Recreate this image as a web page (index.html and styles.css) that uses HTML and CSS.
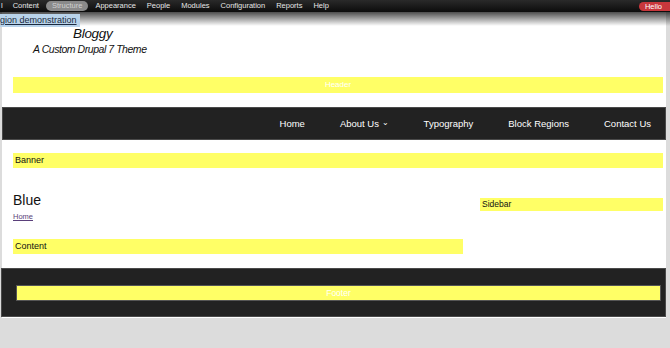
FILE: index.html
```html
<!DOCTYPE html>
<html lang="en">
  <head>
    <meta charset="UTF-8" />
    <meta name="viewport" content="width=device-width, initial-scale=1.0" />
    <title>Bloggy - Blue</title>
    <link rel="stylesheet" href="styles.css">
  </head>
  <body>
    <div class="toolbar">
      <ul class="toolbar-menu">
        <li class="cut">l</li>
        <li>Content</li>
        <li class="active">Structure</li>
        <li>Appearance</li>
        <li>People</li>
        <li>Modules</li>
        <li>Configuration</li>
        <li>Reports</li>
        <li>Help</li>
      </ul>
      <span class="hello">Hello</span>
    </div>

    <div class="page">
      <div class="toolbar-shadow"></div>
      <a class="demo-tab" href="#">gion demonstration</a>

      <div class="branding">
        <div class="site-name">Bloggy</div>
        <div class="site-slogan">A Custom Drupal 7 Theme</div>
      </div>

      <div class="region region-header">Header</div>

      <nav class="main-nav">
        <a href="#">Home</a>
        <a href="#">About Us <span class="caret">&#8964;</span></a>
        <a href="#">Typography</a>
        <a href="#">Block Regions</a>
        <a href="#">Contact Us</a>
      </nav>

      <div class="region region-banner">Banner</div>

      <div class="main">
        <div class="content-col">
          <h1>Blue</h1>
          <a class="breadcrumb" href="#">Home</a>
          <div class="region region-content">Content</div>
        </div>
        <div class="sidebar-col">
          <div class="region region-sidebar">Sidebar</div>
        </div>
      </div>

      <footer class="site-footer">
        <div class="region region-footer">Footer</div>
      </footer>
    </div>
  </body>
</html>
```

FILE: styles.css
```css
body {
  margin: 0;
  padding: 0;
  background-color: #dcdcdc;
  font-family: "Liberation Sans", Arial, sans-serif;
}

/* admin toolbar */
.toolbar {
  height: 12px;
  background: linear-gradient(#2a2a2a, #0c0c0c);
  display: flex;
  align-items: center;
  justify-content: space-between;
  position: relative;
  z-index: 2;
}

.toolbar-menu {
  list-style: none;
  margin: 0;
  padding: 0;
  display: flex;
  align-items: center;
  font-size: 7.5px;
  color: #e6e6e6;
}

.toolbar-menu li {
  padding: 1px 4px;
  margin-right: 3px;
  line-height: 8px;
}

.toolbar-menu li.cut {
  margin-left: -3px;
  margin-right: 2px;
}

.toolbar-menu li.active {
  background-color: #8a8a8a;
  color: #d0d0d0;
  border-radius: 6px;
  padding: 1px 6px;
}

.hello {
  background-color: #c9373c;
  color: #fff;
  font-size: 7.5px;
  line-height: 9px;
  padding: 0 8px 0 6px;
  border-radius: 5px 0 0 5px;
}

/* page */
.page {
  background-color: #fff;
  margin: 0 4px 0 2px;
  padding-top: 2px;
  padding-bottom: 1px;
  position: relative;
}

.toolbar-shadow {
  position: absolute;
  top: 0;
  left: -2px;
  right: -4px;
  height: 14px;
  background: linear-gradient(rgba(0, 0, 0, 0.7), rgba(0, 0, 0, 0));
  pointer-events: none;
}

.demo-tab {
  display: block;
  width: fit-content;
  position: relative;
  margin-left: -2px;
  padding: 0 3px 0 0;
  height: 13px;
  line-height: 13px;
  font-size: 9px;
  color: #1a2a40;
  background-color: #b9d3ea;
  z-index: 1;
}

.branding {
  margin-left: 13px;
  font-style: italic;
  color: #111;
}

.site-name {
  font-size: 13.5px;
  line-height: 14px;
  letter-spacing: -0.3px;
  margin-left: 58px;
}

.site-slogan {
  font-size: 10.5px;
  line-height: 12px;
  letter-spacing: -0.45px;
  margin-top: 2px;
  margin-left: 18px;
}

.region {
  background-color: #ffff66;
  font-size: 9px;
  height: 15px;
  line-height: 15px;
}

.region-header {
  margin: 22px 3px 0 11px;
  height: 16px;
  line-height: 16px;
  text-align: center;
  color: #fff;
  font-size: 8px;
}

/* main navigation */
.main-nav {
  margin-top: 14px;
  height: 31px;
  background-color: #222;
  border: 1px solid #4a4a4a;
  display: flex;
  justify-content: flex-end;
  align-items: center;
  gap: 35px;
  padding-right: 14px;
}

.main-nav a {
  color: #fff;
  text-decoration: none;
  font-size: 9.5px;
}

.caret {
  font-size: 8px;
  position: relative;
  top: -2px;
}

.region-banner {
  margin: 13px 3px 0 11px;
  padding-left: 2px;
  color: #111;
}

/* content and sidebar */
.main {
  display: flex;
  gap: 17px;
  margin: 25px 3px 0 11px;
}

.content-col {
  width: 450px;
}

.content-col h1 {
  margin: 0;
  font-size: 14px;
  line-height: 15px;
  font-weight: normal;
  color: #111;
}

.breadcrumb {
  display: block;
  font-size: 7.5px;
  line-height: 9px;
  margin-top: 4px;
  color: #5a3f7a;
}

.region-content {
  margin-top: 18px;
  padding-left: 2px;
  color: #111;
}

.sidebar-col {
  flex: 1;
  padding-top: 5px;
}

.region-sidebar {
  height: 13px;
  line-height: 13px;
  padding-left: 2px;
  color: #111;
  font-size: 8.5px;
}

/* footer */
.site-footer {
  margin: 14px 0 0 -1px;
  background-color: #222;
  border: 1px solid #4a4a4a;
  padding: 16px 4px 15px 14px;
}

.region-footer {
  border: 1px solid #555;
  text-align: center;
  color: #fff;
  font-size: 8.5px;
  height: 14px;
  line-height: 14px;
}
```
